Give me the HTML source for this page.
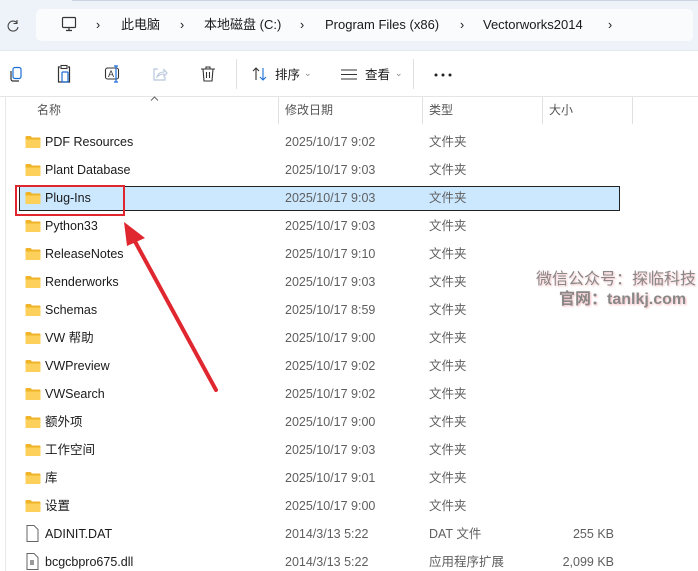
<!DOCTYPE html>
<html><head><meta charset="utf-8"><style>
body{margin:0;width:698px;height:571px;overflow:hidden;background:#fff;font-family:"Liberation Sans","Noto Sans CJK SC",sans-serif;font-size:12.5px;color:#1a1a1a;position:relative}
.top{position:absolute;left:0;top:0;width:698px;height:50px;background:#eef3f9}
.top .line{position:absolute;left:72px;top:0;width:626px;height:1px;background:#c9d4e0}
.addr{position:absolute;left:36px;top:9px;width:657px;height:32px;background:#f9fbfd;border-radius:5px}
.t{position:absolute;white-space:nowrap;line-height:16px;height:16px}
.tb{position:absolute;left:0;top:50px;width:698px;height:46px;background:#fff;border-top:1px solid #e3e8ee}
.sep{position:absolute;width:1px;background:#e0e0e0}
.hdr{color:#555;font-size:12px}
.g{color:#5f5f5f}
</style></head><body>
<div class="top"><div class="line"></div>
<svg style="position:absolute;left:6px;top:19px" width="14" height="14" viewBox="0 0 14 14"><path d="M11 4A5 5 0 1 0 12 8" fill="none" stroke="#444" stroke-width="1.1"/><path d="M11 1v3.5H7.5" fill="none" stroke="#444" stroke-width="1.1"/></svg>
<div class="addr"></div>
<svg style="position:absolute;left:61px;top:16px" width="16" height="16" viewBox="0 0 16 16"><rect x="1.5" y="1.5" width="13" height="10" rx="1" fill="none" stroke="#333" stroke-width="1.2"/><path d="M5 14.5h6M8 11.5v3" stroke="#333" stroke-width="1.2"/></svg>
<div class="t" style="left:96px;top:17px">›</div>
<div class="t" style="left:121px;top:17px;font-size:13px">此电脑</div>
<div class="t" style="left:180px;top:17px">›</div>
<div class="t" style="left:204px;top:17px;font-size:13px">本地磁盘 (C:)</div>
<div class="t" style="left:300px;top:17px">›</div>
<div class="t" style="left:325px;top:17px;font-size:13px">Program Files (x86)</div>
<div class="t" style="left:460px;top:17px">›</div>
<div class="t" style="left:483px;top:17px;font-size:13px">Vectorworks2014</div>
<div class="t" style="left:608px;top:17px">›</div>
</div>
<div class="tb">
<svg style="position:absolute;left:8px;top:15px" width="16" height="17" viewBox="0 0 16 17"><rect x="5" y="1.5" width="8" height="11" rx="2" fill="none" stroke="#1a6ed8" stroke-width="1.2"/><path d="M3 5v8a2 2 0 0 0 2 2h6" fill="none" stroke="#333" stroke-width="1.2"/></svg>
<svg style="position:absolute;left:56px;top:13px" width="16" height="20" viewBox="0 0 16 20"><path d="M4 3H2.5v15h11V3H12" fill="none" stroke="#333" stroke-width="1.2"/><rect x="5" y="1.5" width="6" height="3" fill="none" stroke="#333" stroke-width="1.1"/><rect x="6" y="8" width="6" height="10" rx="1" fill="none" stroke="#1a6ed8" stroke-width="1.2"/></svg>
<svg style="position:absolute;left:104px;top:14px" width="18" height="18" viewBox="0 0 18 18"><rect x="1.5" y="3" width="13" height="11" rx="2" fill="none" stroke="#333" stroke-width="1.1"/><text x="4" y="12" font-size="9" font-family="Liberation Sans" fill="#333">A</text><path d="M12 1v16M10 1h4M10 17h4" stroke="#1a6ed8" stroke-width="1.2"/></svg>
<svg style="position:absolute;left:152px;top:15px" width="16" height="16" viewBox="0 0 16 16"><path d="M6 3H2v11h11v-3" fill="none" stroke="#b8c8dc" stroke-width="1.2"/><path d="M5 11c1-4 4-5 7-5V3.5l3 3.5-3 3.5V8c-3 0-5 1-7 3z" fill="none" stroke="#b8c8dc" stroke-width="1.1"/></svg>
<svg style="position:absolute;left:200px;top:14px" width="16" height="18" viewBox="0 0 16 18"><path d="M1 4h14M6 4V2h4v2M3 4l1 12h8l1-12M6.5 7v6M9.5 7v6" fill="none" stroke="#333" stroke-width="1.1"/></svg>
<div class="sep" style="left:236px;top:8px;height:30px"></div>
<svg style="position:absolute;left:252px;top:16px" width="16" height="14" viewBox="0 0 16 14"><path d="M4 13V1M1 4l3-3 3 3" fill="none" stroke="#333" stroke-width="1.1"/><path d="M11 1v12M8 10l3 3 3-3" fill="none" stroke="#1a6ed8" stroke-width="1.1"/></svg>
<div class="t" style="left:275px;top:16px">排序</div>
<div class="t" style="left:304px;top:14px;font-size:9px;color:#888">⌄</div>
<svg style="position:absolute;left:341px;top:18px" width="16" height="11" viewBox="0 0 16 11"><path d="M0 1h16M0 5.5h16M0 10h16" stroke="#333" stroke-width="1.1"/></svg>
<div class="t" style="left:365px;top:16px">查看</div>
<div class="t" style="left:395px;top:14px;font-size:9px;color:#888">⌄</div>
<div class="sep" style="left:413px;top:8px;height:30px"></div>
<svg style="position:absolute;left:434px;top:22px" width="18" height="4" viewBox="0 0 18 4"><circle cx="2" cy="2" r="1.5" fill="#222"/><circle cx="9" cy="2" r="1.5" fill="#222"/><circle cx="16" cy="2" r="1.5" fill="#222"/></svg>
</div>
<div style="position:absolute;left:0;top:96px;width:698px;height:1px;background:#e5e5e5"></div>
<div style="position:absolute;left:5px;top:97px;width:1px;height:474px;background:#e8e8e8"></div>
<svg style="position:absolute;left:150px;top:96px" width="9" height="5" viewBox="0 0 9 5"><path d="M1 4.5L4.5 1 8 4.5" fill="none" stroke="#666"/></svg>
<div class="t hdr" style="left:37px;top:102px">名称</div>
<div class="sep" style="left:278px;top:97px;height:27px"></div>
<div class="t hdr" style="left:285px;top:102px">修改日期</div>
<div class="sep" style="left:422px;top:97px;height:27px"></div>
<div class="t hdr" style="left:429px;top:102px">类型</div>
<div class="sep" style="left:542px;top:97px;height:27px"></div>
<div class="t hdr" style="left:549px;top:102px">大小</div>
<div class="sep" style="left:632px;top:97px;height:27px"></div>

<div style="position:absolute;left:19px;top:186px;width:599px;height:23px;background:#cce8ff;border:1px solid #222"></div>
<div style="position:absolute;left:15px;top:185px;width:106px;height:27px;border:2px solid #e0262e"></div>

<div id="rows"></div>
<script>
var R=[["PDF Resources","2025/10/17 9:02"],["Plant Database","2025/10/17 9:03"],["Plug-Ins","2025/10/17 9:03"],["Python33","2025/10/17 9:03"],["ReleaseNotes","2025/10/17 9:10"],["Renderworks","2025/10/17 9:03"],["Schemas","2025/10/17 8:59"],["VW 帮助","2025/10/17 9:00"],["VWPreview","2025/10/17 9:02"],["VWSearch","2025/10/17 9:02"],["额外项","2025/10/17 9:00"],["工作空间","2025/10/17 9:03"],["库","2025/10/17 9:01"],["设置","2025/10/17 9:00"]];
var h="";
R.forEach(function(r,i){var y=134+i*28;
h+='<svg style="position:absolute;left:25px;top:'+(y+1)+'px" width="16" height="14" viewBox="0 0 16 14"><path d="M0.5 2a1 1 0 0 1 1-1h4l1.5 1.5h7.5a1 1 0 0 1 1 1V12a1 1 0 0 1-1 1h-13a1 1 0 0 1-1-1z" fill="#f0b429"/><path d="M0.5 4.5h15V12a1 1 0 0 1-1 1h-13a1 1 0 0 1-1-1z" fill="#fcd05a"/></svg>';
h+='<div class="t" style="left:45px;top:'+y+'px">'+r[0]+'</div><div class="t g" style="left:285px;top:'+y+'px">'+r[1]+'</div><div class="t g" style="left:429px;top:'+y+'px">文件夹</div>';});
var F=[["ADINIT.DAT","DAT 文件","255 KB"],["bcgcbpro675.dll","应用程序扩展","2,099 KB"]];
F.forEach(function(r,i){var y=526+i*28;
h+='<svg style="position:absolute;left:26px;top:'+(y-1)+'px" width="13" height="17" viewBox="0 0 13 17"><path d="M1 .5h7l4 4v12H1z" fill="#fff" stroke="#666"/>'+(i?'<rect x="4" y="7" width="4" height="5" fill="#999"/>':'')+'</svg>';
h+='<div class="t" style="left:45px;top:'+y+'px">'+r[0]+'</div><div class="t g" style="left:285px;top:'+y+'px">2014/3/13 5:22</div><div class="t g" style="left:429px;top:'+y+'px">'+r[1]+'</div><div class="t g" style="right:84px;top:'+y+'px">'+r[2]+'</div>';});
document.getElementById("rows").innerHTML=h;
</script>
<svg style="position:absolute;left:0;top:0" width="698" height="571"><path d="M216 390L132 236" stroke="#e0262e" stroke-width="4" stroke-linecap="round"/><path d="M124 222L145 238L127 246Z" fill="#e0262e"/></svg>
<div class="t" style="left:536px;top:270px;font-size:16px;line-height:20px;height:20px;color:#888;text-shadow:1px 1px 2px #f4b6bb">微信公众号：探临科技</div>
<div class="t" style="left:559px;top:290px;font-size:16px;line-height:20px;height:20px;color:#888;font-weight:bold;text-shadow:1px 1px 2px #f4b6bb">官网：tanlkj.com</div>
</body></html>
